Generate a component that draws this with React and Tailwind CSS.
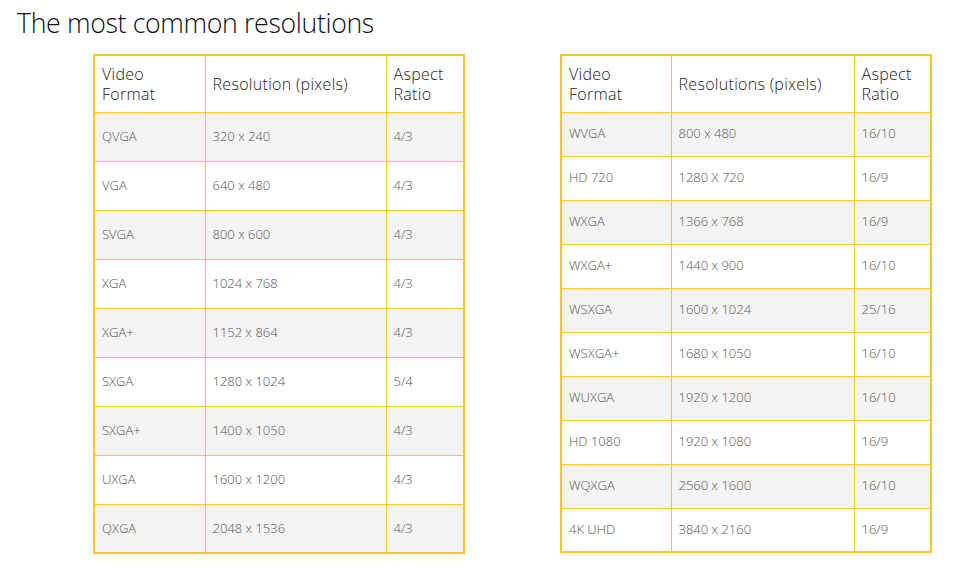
const LEFT = [
  ['QVGA', '320 x 240', '4/3'],
  ['VGA', '640 x 480', '4/3'],
  ['SVGA', '800 x 600', '4/3'],
  ['XGA', '1024 x 768', '4/3'],
  ['XGA+', '1152 x 864', '4/3'],
  ['SXGA', '1280 x 1024', '5/4'],
  ['SXGA+', '1400 x 1050', '4/3'],
  ['UXGA', '1600 x 1200', '4/3'],
  ['QXGA', '2048 x 1536', '4/3'],
]

const RIGHT = [
  ['WVGA', '800 x 480', '16/10'],
  ['HD 720', '1280 X 720', '16/9'],
  ['WXGA', '1366 x 768', '16/9'],
  ['WXGA+', '1440 x 900', '16/10'],
  ['WSXGA', '1600 x 1024', '25/16'],
  ['WSXGA+', '1680 x 1050', '16/10'],
  ['WUXGA', '1920 x 1200', '16/10'],
  ['HD 1080', '1920 x 1080', '16/9'],
  ['WQXGA', '2560 x 1600', '16/10'],
  ['4K UHD', '3840 x 2160', '16/9'],
]

function ResTable({ rows, cols, resLabel, rowH }) {
  return (
    <table className="border-collapse border-2 border-[#fdc62e] table-fixed w-[370px]">
      <colgroup>
        {cols.map((w, i) => <col key={i} style={{ width: w }} />)}
      </colgroup>
      <thead>
        <tr className="h-[57px]">
          <th className="border border-[#fdc62e] text-left font-light text-[16px] tracking-[0.3px] leading-[20px] text-[#222] pl-[7px] pr-2 align-middle">Video<br />Format</th>
          <th className="border border-[#fdc62e] text-left font-light text-[16px] tracking-[0.3px] leading-[20px] text-[#222] pl-[7px] pr-2 align-middle">{resLabel}</th>
          <th className="border border-[#fdc62e] text-left font-light text-[16px] tracking-[0.3px] leading-[20px] text-[#222] pl-[7px] pr-2 align-middle">Aspect<br />Ratio</th>
        </tr>
      </thead>
      <tbody>
        {rows.map((r, i) => (
          <tr key={r[0]} className={i % 2 === 0 ? 'bg-[#f4f4f4]' : 'bg-white'} style={{ height: rowH }}>
            {r.map((c, j) => (
              <td key={j} className="border border-[#fdc62e] text-[13px] font-light text-[#555] pl-[7px] align-middle">{c}</td>
            ))}
          </tr>
        ))}
      </tbody>
    </table>
  )
}

export default function App() {
  return (
    <div className="w-[954px] h-[568px] bg-white overflow-hidden" style={{ fontFamily: '"Open Sans", "Noto Sans", sans-serif' }}>
      <h1 className="pl-[17px] pt-[5px] text-[26.7px] leading-[36px] font-light tracking-[-0.35px] text-[#111]">The most common resolutions</h1>
      <div className="flex items-start gap-[95px] pl-[93px] mt-[13px]">
        <ResTable rows={LEFT} cols={[111, 181, 78]} resLabel="Resolution (pixels)" rowH={49} />
        <ResTable rows={RIGHT} cols={[110, 183, 77]} resLabel="Resolutions (pixels)" rowH={44} />
      </div>
    </div>
  )
}
